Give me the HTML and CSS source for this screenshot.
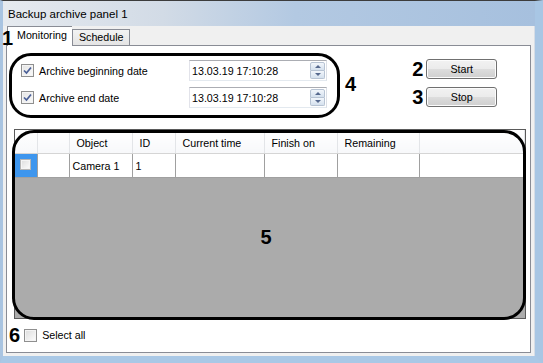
FILE: index.html
```html
<!DOCTYPE html>
<html lang="en">
<head>
  <meta charset="UTF-8">
  <title>Backup archive panel 1</title>
  <link rel="stylesheet" href="styles.css">
</head>
<body>
  <div class="window">
    <div class="title-bar">Backup archive panel 1</div>

    <div class="content">
      <span class="mark mark-1">1</span>

      <div class="tabs">
        <div class="tab active">Monitoring</div>
        <div class="tab">Schedule</div>
      </div>

      <div class="tab-page">
        <div class="top-row">
          <div class="group">
            <div class="field-row">
              <label class="check-label">
                <span class="cb checked">
                  <svg width="9" height="9" viewBox="0 0 9 9"><path d="M1 4.5 L3.5 7 L8 1.5" fill="none" stroke="#4a5f97" stroke-width="1.7"/></svg>
                </span>
                Archive beginning date
              </label>
              <div class="date-field">
                <span>13.03.19 17:10:28</span>
                <span class="spin"><i class="up"></i><i class="down"></i></span>
              </div>
            </div>
            <div class="field-row">
              <label class="check-label">
                <span class="cb checked">
                  <svg width="9" height="9" viewBox="0 0 9 9"><path d="M1 4.5 L3.5 7 L8 1.5" fill="none" stroke="#4a5f97" stroke-width="1.7"/></svg>
                </span>
                Archive end date
              </label>
              <div class="date-field">
                <span>13.03.19 17:10:28</span>
                <span class="spin"><i class="up"></i><i class="down"></i></span>
              </div>
            </div>
          </div>
          <span class="mark mark-4">4</span>

          <div class="actions">
            <div class="action-row"><span class="mark">2</span><button class="btn">Start</button></div>
            <div class="action-row"><span class="mark">3</span><button class="btn">Stop</button></div>
          </div>
        </div>

        <div class="grid">
          <table class="grid-table">
            <thead>
              <tr>
                <th class="c-sel"></th>
                <th class="c-blank"></th>
                <th class="c-obj">Object</th>
                <th class="c-id">ID</th>
                <th class="c-cur">Current time</th>
                <th class="c-fin">Finish on</th>
                <th class="c-rem">Remaining</th>
                <th></th>
              </tr>
            </thead>
            <tbody>
              <tr>
                <td class="c-sel selected"><span class="cb small"></span></td>
                <td></td>
                <td>Camera 1</td>
                <td>1</td>
                <td></td>
                <td></td>
                <td></td>
                <td class="empty"></td>
              </tr>
            </tbody>
          </table>
          <div class="grid-empty"><span class="mark">5</span></div>
          <div class="grid-outline"></div>
        </div>

        <div class="select-row">
          <span class="mark">6</span>
          <label class="check-label">
            <span class="cb"></span>
            Select all
          </label>
        </div>
      </div>
    </div>
  </div>
</body>
</html>
```

FILE: styles.css
```css
body {
  margin: 0;
  width: 543px;
  height: 363px;
  overflow: hidden;
  font-family: "Liberation Sans", Arial, sans-serif;
  font-size: 10.7px;
  color: #000;
  background: #a9c6e4;
}

.window {
  width: 543px;
  height: 363px;
  box-sizing: border-box;
  border-top: 1px solid #3c3c3c;
  border-left: 3px solid #a9c4e1;
  border-right: 8px solid #a8c6e4;
  border-bottom: 7px solid #a9c8e6;
  display: flex;
  flex-direction: column;
}

.title-bar {
  height: 25px;
  flex: none;
  display: flex;
  align-items: center;
  padding-left: 5px;
  font-size: 11.5px;
  background: linear-gradient(to right, #e6eaef 0%, #d2dbe6 30%, #b3c9e2 55%, #a6c0de 100%);
}

.content {
  position: relative;
  flex: 1;
  background: #f0f0f0;
  display: flex;
  flex-direction: column;
  padding: 1px 3px 3px 3px;
  border-right: 1px solid #d6dde6;
}

/* annotation digits */
.mark {
  font-weight: bold;
  font-size: 20px;
  line-height: 20px;
}

.mark-1 {
  position: absolute;
  left: -1px;
  top: 2px;
  z-index: 3;
}

/* tabs */
.tabs {
  display: flex;
  align-items: flex-end;
  height: 18px;
  position: relative;
  z-index: 2;
  padding-left: 1px;
}

.tab {
  height: 15px;
  line-height: 15px;
  padding: 0 6px;
  border: 1px solid #898c95;
  border-bottom: none;
  background: linear-gradient(#f3f3f3, #e4e4e4);
}

.tab.active {
  height: 19px;
  line-height: 17px;
  margin-bottom: -1px;
  padding: 0 5px 0 9px;
  background: #fff;
  border-right: none;
}

.tab-page {
  flex: 1;
  background: #fff;
  border: 1px solid #898c95;
  padding: 7px 0 0 2px;
  display: flex;
  flex-direction: column;
}

.top-row {
  display: flex;
  align-items: flex-start;
}

.group {
  width: 316px;
  height: 52px;
  border: 3px solid #000;
  border-radius: 22px;
  padding: 4px 0 3px 9px;
  display: flex;
  flex-direction: column;
  gap: 6px;
}

.field-row {
  display: flex;
  align-items: center;
  height: 21px;
}

.check-label {
  display: flex;
  align-items: center;
  gap: 5px;
}

.field-row .check-label {
  width: 168px;
}

.cb {
  width: 11px;
  height: 11px;
  border: 1px solid #8f8f8f;
  background: linear-gradient(135deg, #dcdcdc, #fdfdfd);
  box-shadow: inset 0 0 0 1px #f4f4f4;
  display: inline-flex;
  align-items: center;
  justify-content: center;
  flex: none;
}

.cb.checked {
  background: linear-gradient(135deg, #e4e4e4, #fafafa);
}

.cb.small {
  width: 9px;
  height: 9px;
  border-color: #b5b5b5;
}

.date-field {
  width: 134px;
  height: 19px;
  border: 1px solid #abadb3;
  border-color: #abadb3 #dbdfe6 #e3e9ef #e2e3ea;
  display: flex;
  align-items: center;
  justify-content: space-between;
  padding-left: 2px;
}

.spin {
  width: 15px;
  height: 17px;
  margin-right: 1px;
  display: flex;
  flex-direction: column;
}

.spin i {
  flex: 1;
  border: 1px solid #b7c3d3;
  background: linear-gradient(#f2f6fb, #d5e1ee);
  position: relative;
}

.spin i.up {
  border-radius: 2px 2px 0 0;
}

.spin i.down {
  border-top: none;
  border-radius: 0 0 2px 2px;
}

.spin i::after {
  content: "";
  position: absolute;
  left: 4px;
  border-left: 3px solid transparent;
  border-right: 3px solid transparent;
}

.spin i.up::after {
  top: 2px;
  border-bottom: 3px solid #56698e;
}

.spin i.down::after {
  top: 2px;
  border-top: 3px solid #56698e;
}

.mark-4 {
  margin: 21px 0 0 5px;
}

.actions {
  margin: 6px 0 0 56px;
  display: flex;
  flex-direction: column;
  gap: 8px;
}

.action-row {
  display: flex;
  align-items: center;
  gap: 3px;
}

.btn {
  width: 71px;
  height: 20px;
  padding: 0;
  font-family: inherit;
  font-size: 10.7px;
  border: 1px solid #707070;
  border-radius: 3px;
  background: linear-gradient(#f2f2f2 0%, #ebebeb 50%, #dddddd 51%, #cfcfcf 100%);
  box-shadow: inset 0 0 0 1px #fcfcfc;
}

/* objects grid */
.grid {
  position: relative;
  margin: 11px 4px 0 5px;
  height: 188px;
  border: 1px solid #5a5a5a;
  background: #ababab;
  display: flex;
  flex-direction: column;
}

.grid-table {
  border-collapse: collapse;
  width: 100%;
  table-layout: fixed;
  background: #fff;
}

.grid-table th,
.grid-table td {
  box-sizing: border-box;
}

.grid-table th {
  height: 23px;
  padding: 3px 0 0 7px;
  text-align: left;
  font-weight: normal;
  background: linear-gradient(#ffffff, #f7f8fa);
  border-right: 1px solid #e3e5e8;
  border-bottom: 1px solid #d5d5d5;
}

.grid-table td {
  height: 24px;
  padding: 1px 0 0 3px;
  border: 1px solid #a0a0a0;
  border-top: none;
}

.grid-table td:first-child {
  border-left: none;
}

.grid-table td.empty {
  border-right: none;
}

.c-sel { width: 22px; }
.c-blank { width: 32px; }
.c-obj { width: 63px; }
.c-id { width: 43px; }
.c-cur { width: 89px; }
.c-fin { width: 73px; }
.c-rem { width: 82px; }

.grid-table th.c-sel,
.grid-table th.c-blank {
  padding: 0;
}

.grid-table td.selected {
  background: #3e96ee;
  padding: 0 0 0 5px;
}

.grid-empty {
  flex: 1;
  display: flex;
  align-items: center;
  justify-content: center;
  padding: 0 8px 21px 0;
}

.grid-outline {
  position: absolute;
  left: -3px;
  top: 0;
  right: -1px;
  bottom: -2px;
  border: 3px solid #000;
  border-radius: 22px;
  pointer-events: none;
}

.select-row {
  display: flex;
  align-items: center;
  gap: 4px;
  margin-top: 6px;
  height: 20px;
}
```
